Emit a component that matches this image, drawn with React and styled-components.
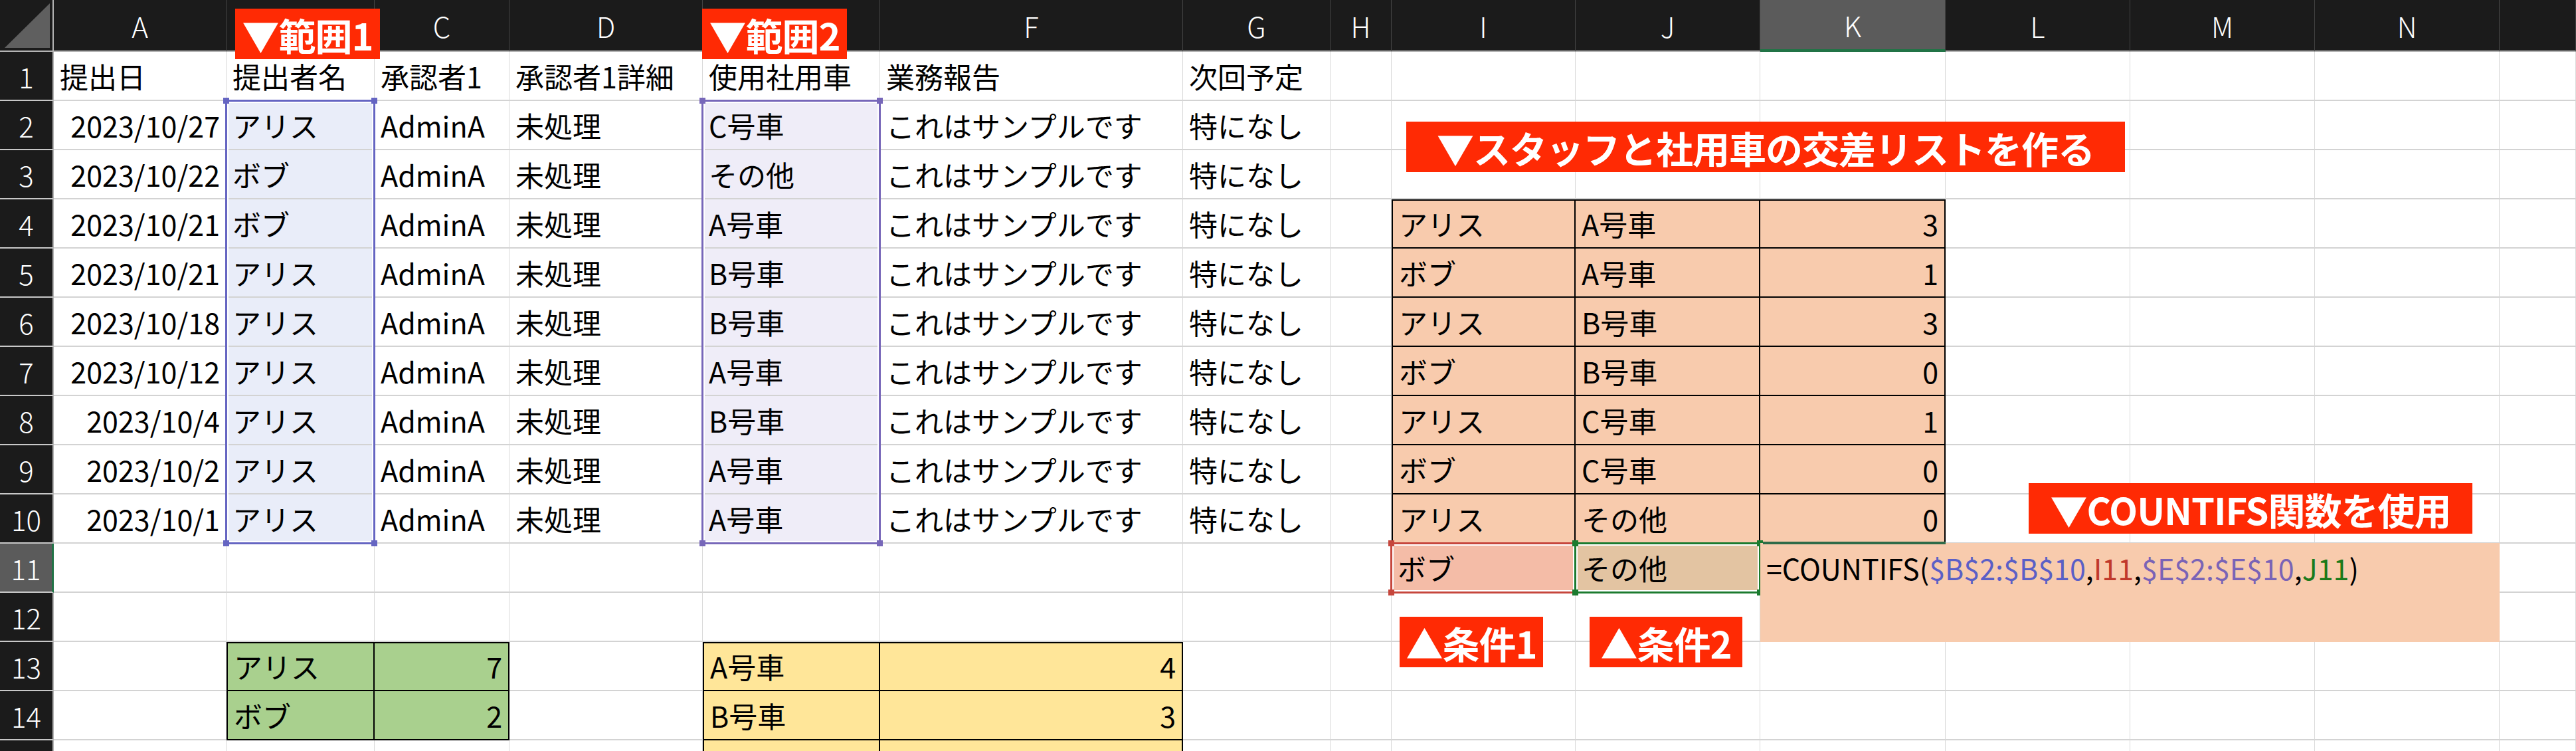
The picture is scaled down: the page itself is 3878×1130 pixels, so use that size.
import React from "react";
import styled, { createGlobalStyle } from "styled-components";

const GlobalStyle = createGlobalStyle`
  html, body {
    margin: 0;
    padding: 0;
    background: #ffffff;
    overflow: hidden;
  }
  body {
    font-family: "Noto Sans CJK JP", "Noto Sans", sans-serif;
  }
`;

const COLS = ["A", "B", "C", "D", "E", "F", "G", "H", "I", "J", "K", "L", "M", "N", "O"];
const COL_WIDTHS = [260, 223, 203, 291, 267, 456, 222, 92, 277, 278, 279, 278, 278, 278, 115];
const ROW_COUNT = 15;

const FILL = {
  range1: "#e9edf9",
  range2: "#efedf8",
  peach: "#f8cbad",
  green: "#a9d08e",
  yellow: "#ffe699",
  cond1: "#f4bca7",
  cond2: "#e3c4a2",
};

const records = [
  ["2023/10/27", "アリス", "C号車"],
  ["2023/10/22", "ボブ", "その他"],
  ["2023/10/21", "ボブ", "A号車"],
  ["2023/10/21", "アリス", "B号車"],
  ["2023/10/18", "アリス", "B号車"],
  ["2023/10/12", "アリス", "A号車"],
  ["2023/10/4", "アリス", "B号車"],
  ["2023/10/2", "アリス", "A号車"],
  ["2023/10/1", "アリス", "A号車"],
];

const crossList = [
  ["アリス", "A号車", 3],
  ["ボブ", "A号車", 1],
  ["アリス", "B号車", 3],
  ["ボブ", "B号車", 0],
  ["アリス", "C号車", 1],
  ["ボブ", "C号車", 0],
  ["アリス", "その他", 0],
];

// セル内容を組み立てる
const buildCells = () => {
  const cells = {};
  const put = (key, data) => {
    cells[key] = { ...cells[key], ...data };
  };

  ["提出日", "提出者名", "承認者1", "承認者1詳細", "使用社用車", "業務報告", "次回予定"].forEach(
    (v, i) => put(`${COLS[i]}1`, { v })
  );

  records.forEach(([date, name, car], i) => {
    const r = i + 2;
    put(`A${r}`, { v: date, right: true });
    put(`B${r}`, { v: name, fill: FILL.range1 });
    put(`C${r}`, { v: "AdminA" });
    put(`D${r}`, { v: "未処理" });
    put(`E${r}`, { v: car, fill: FILL.range2 });
    put(`F${r}`, { v: "これはサンプルです" });
    put(`G${r}`, { v: "特になし" });
  });

  crossList.forEach(([name, car, n], i) => {
    const r = i + 4;
    const top = i === 0;
    put(`I${r}`, { v: name, fill: FILL.peach, boxed: true, edgeLeft: true, edgeTop: top });
    put(`J${r}`, { v: car, fill: FILL.peach, boxed: true, edgeTop: top });
    put(`K${r}`, { v: String(n), right: true, fill: FILL.peach, boxed: true, edgeTop: top });
  });
  put("I11", { v: "ボブ", fill: FILL.cond1 });
  put("J11", { v: "その他", fill: FILL.cond2 });

  [["アリス", 7], ["ボブ", 2]].forEach(([name, n], i) => {
    const r = i + 13;
    put(`B${r}`, { v: name, fill: FILL.green, boxed: true, edgeLeft: true, edgeTop: i === 0 });
    put(`C${r}`, { v: String(n), right: true, fill: FILL.green, boxed: true, edgeTop: i === 0 });
  });

  [["A号車", 4], ["B号車", 3], ["", ""]].forEach(([car, n], i) => {
    const r = i + 13;
    put(`E${r}`, { v: car, fill: FILL.yellow, boxed: true, edgeLeft: true, edgeTop: i === 0 });
    put(`F${r}`, { v: String(n), right: true, fill: FILL.yellow, boxed: true, edgeTop: i === 0 });
  });

  return cells;
};

const Sheet = styled.div`
  position: relative;
  display: grid;
  grid-template-columns: 81px ${COL_WIDTHS.map((w) => `${w}px`).join(" ")};
  grid-template-rows: 78px repeat(${ROW_COUNT}, 74px);
  width: 3878px;
  height: 1130px;
  overflow: hidden;
  font-family: "Noto Sans CJK JP", "Noto Sans", sans-serif;
  background: #ffffff;
`;

const Corner = styled.div`
  grid-column: 1;
  grid-row: 1;
  background: #1b1b1b;
  border-right: 2px solid #b4b4b4;
  border-bottom: 2px solid #b4b4b4;
  box-sizing: border-box;
  display: flex;
  align-items: flex-end;
  justify-content: flex-end;
  padding: 0 4px 4px 0;

  &::after {
    content: "";
    width: 68px;
    height: 67px;
    background: #5f5f5f;
    clip-path: polygon(100% 0, 100% 100%, 0 100%);
  }
`;

const ColHead = styled.div`
  grid-column: ${(p) => p.$c};
  grid-row: 1;
  box-sizing: border-box;
  background: ${(p) => (p.$active ? "#5b5b5b" : "#1b1b1b")};
  border-right: 1px solid #434343;
  border-bottom: ${(p) => (p.$active ? "4px solid #217346" : "2px solid #b4b4b4")};
  color: #ffffff;
  font-size: 42px;
  font-weight: 300;
  display: flex;
  align-items: center;
  justify-content: center;
`;

const RowHead = styled.div`
  grid-column: 1;
  grid-row: ${(p) => p.$r};
  box-sizing: border-box;
  background: ${(p) => (p.$active ? "#5b5b5b" : "#1b1b1b")};
  border-right: ${(p) => (p.$active ? "3px solid #217346" : "2px solid #b4b4b4")};
  border-bottom: 2px solid #c8c8c8;
  color: #ffffff;
  font-size: 42px;
  font-weight: 300;
  display: flex;
  align-items: center;
  justify-content: center;
`;

const edgeShadow = (p) => {
  const list = [];
  if (p.$edgeTop) list.push("inset 0 2px 0 #000");
  if (p.$edgeLeft) list.push("inset 2px 0 0 #000");
  return list.length ? list.join(", ") : "none";
};

const Cell = styled.div`
  grid-column: ${(p) => p.$c};
  grid-row: ${(p) => p.$r};
  box-sizing: border-box;
  display: flex;
  align-items: center;
  justify-content: ${(p) => (p.$right ? "flex-end" : "flex-start")};
  padding: 0 9px 0 ${(p) => (p.$edgeLeft ? 11 : 9)}px;
  background: ${(p) => p.$fill || "#ffffff"};
  border-right: ${(p) => (p.$boxed ? "2px solid #000" : "1px solid #d9d9d9")};
  border-bottom: 2px solid ${(p) => (p.$boxed ? "#000" : "#d3d3d3")};
  box-shadow: ${edgeShadow};
  color: #000000;
  font-size: 43px;
  white-space: nowrap;
  overflow: hidden;
`;

const RefFrame = styled.div`
  grid-column: ${(p) => p.$c};
  grid-row: ${(p) => p.$r};
  position: relative;
  z-index: 2;
  margin: -2px -1px -1px -2px;
  border: 3px solid ${(p) => p.$color};
  box-shadow: inset 0 0 0 2px #ffffff;
  pointer-events: none;
`;

const Handle = styled.span`
  position: absolute;
  width: 9px;
  height: 9px;
  background: ${(p) => p.$color};
  ${(p) => (p.$top ? "top: -6px;" : "bottom: -6px;")}
  ${(p) => (p.$left ? "left: -6px;" : "right: -6px;")}
`;

const Editor = styled.div`
  grid-column: 12 / 16;
  grid-row: 12 / 14;
  z-index: 3;
  margin-top: -1px;
  background: #f8cbad;
  font-size: 43px;
  color: #000000;
`;

const FormulaLine = styled.div`
  height: 74px;
  display: flex;
  align-items: center;
  padding: 0 9px;
  white-space: nowrap;
`;

const Ref = styled.span`
  color: ${(p) => p.$color};
`;

const ActiveEdge = styled.div`
  grid-column: 12;
  grid-row: 12;
  align-self: start;
  z-index: 4;
  height: 4px;
  margin: -3px 0 0 4px;
  background: #2f6b48;
`;

const Tag = styled.div`
  position: absolute;
  left: ${(p) => p.$x}px;
  top: ${(p) => p.$y}px;
  width: ${(p) => p.$w}px;
  height: 76px;
  z-index: 6;
  display: flex;
  align-items: center;
  justify-content: center;
  background: #ff2a04;
  color: #ffffff;
  font-size: 56px;
  font-weight: 700;
  letter-spacing: -1px;
  white-space: nowrap;
`;

const Frame = ({ c, r, color }) => (
  <RefFrame $c={c} $r={r} $color={color}>
    <Handle $color={color} $top $left />
    <Handle $color={color} $top />
    <Handle $color={color} $left />
    <Handle $color={color} />
  </RefFrame>
);

const App = () => {
  const cells = buildCells();
  const grid = [];

  for (let r = 1; r <= ROW_COUNT; r++) {
    grid.push(
      <RowHead key={`rh${r}`} $r={r + 1} $active={r === 11}>
        {r}
      </RowHead>
    );
    COLS.forEach((col, i) => {
      const d = cells[`${col}${r}`] || {};
      grid.push(
        <Cell
          key={`${col}${r}`}
          $c={i + 2}
          $r={r + 1}
          $right={d.right}
          $fill={d.fill}
          $boxed={d.boxed}
          $edgeTop={d.edgeTop}
          $edgeLeft={d.edgeLeft}
        >
          {d.v}
        </Cell>
      );
    });
  }

  return (
    <>
      <GlobalStyle />
      <Sheet>
        <Corner />
        {COLS.map((col, i) => (
          <ColHead key={col} $c={i + 2} $active={col === "K"}>
            {col === "O" ? "" : col}
          </ColHead>
        ))}
        {grid}

        <Frame c={3} r="3 / 12" color="#6565c2" />
        <Frame c={6} r="3 / 12" color="#7767b9" />
        <Frame c={10} r={12} color="#c6463c" />
        <Frame c={11} r={12} color="#1b7b2f" />

        <Editor>
          <FormulaLine>
            =COUNTIFS(<Ref $color="#5b5fc6">$B$2:$B$10</Ref>,
            <Ref $color="#c0392b">I11</Ref>,
            <Ref $color="#7a63b6">$E$2:$E$10</Ref>,
            <Ref $color="#1b7a1b">J11</Ref>)
          </FormulaLine>
        </Editor>
        <ActiveEdge />

        <Tag $x={354} $y={13} $w={218}>▼範囲1</Tag>
        <Tag $x={1057} $y={13} $w={218}>▼範囲2</Tag>
        <Tag $x={2117} $y={183} $w={1082}>▼スタッフと社用車の交差リストを作る</Tag>
        <Tag $x={3054} $y={727} $w={668}>▼COUNTIFS関数を使用</Tag>
        <Tag $x={2107} $y={928} $w={216}>▲条件1</Tag>
        <Tag $x={2393} $y={928} $w={230}>▲条件2</Tag>
      </Sheet>
    </>
  );
};

export default App;
